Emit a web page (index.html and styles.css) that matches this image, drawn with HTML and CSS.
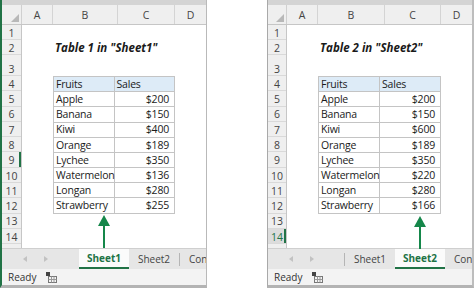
FILE: index.html
```html
<!DOCTYPE html>
<html lang="en">
<head>
    <meta charset="UTF-8">
    <meta name="viewport" content="width=device-width, initial-scale=1.0">
    <title>Table in Sheet1 and Sheet2</title>
    <link rel="stylesheet" href="styles.css">
</head>
<body>
    <!-- Sheet1 window -->
    <div class="panel panel-left">
        <div class="topbar"></div>
        <div class="colheads">
            <div class="corner"></div>
            <div class="colhead">A</div>
            <div class="colhead">B</div>
            <div class="colhead">C</div>
            <div class="colhead">D</div>
        </div>
        <div class="sheet">
            <div class="rowheads">
                <div class="rowhead">1</div>
                <div class="rowhead">2</div>
                <div class="rowhead">3</div>
                <div class="rowhead">4</div>
                <div class="rowhead">5</div>
                <div class="rowhead">6</div>
                <div class="rowhead">7</div>
                <div class="rowhead">8</div>
                <div class="rowhead edge">9</div>
                <div class="rowhead">10</div>
                <div class="rowhead">11</div>
                <div class="rowhead">12</div>
                <div class="rowhead">13</div>
                <div class="rowhead">14</div>
                <div class="rowhead rest"></div>
            </div>
            <div class="cells">
                <div class="title">Table 1 in "Sheet1"</div>
                <table class="data">
                    <tr><th>Fruits</th><th>Sales</th></tr>
                    <tr><td>Apple</td><td class="num">$200</td></tr>
                    <tr><td>Banana</td><td class="num">$150</td></tr>
                    <tr><td>Kiwi</td><td class="num">$400</td></tr>
                    <tr><td>Orange</td><td class="num">$189</td></tr>
                    <tr><td>Lychee</td><td class="num">$350</td></tr>
                    <tr><td>Watermelon</td><td class="num">$136</td></tr>
                    <tr><td>Longan</td><td class="num">$280</td></tr>
                    <tr><td>Strawberry</td><td class="num">$255</td></tr>
                </table>
            </div>
        </div>
        <div class="tabs">
            <div class="tab-nav">
                <svg width="4" height="6" viewBox="0 0 4 6"><path d="M4 0 L0 3 L4 6 Z" fill="#c2c2c2"/></svg>
                <svg width="4" height="6" viewBox="0 0 4 6"><path d="M0 0 L4 3 L0 6 Z" fill="#c2c2c2"/></svg>
            </div>
            <div class="tab active">Sheet1</div>
            <div class="tab">Sheet2</div>
            <span class="sep"></span>
            <div class="tab cut">Con</div>
        </div>
        <div class="status">
            <span>Ready</span>
            <svg class="macro" width="11" height="11" viewBox="0 0 11 11">
                <rect x="0" y="0" width="4" height="4" fill="#444"/>
                <rect x="2.5" y="4.5" width="8" height="6" fill="none" stroke="#777"/>
                <path d="M2.5 7.5 H10.5 M5.5 4.5 V10.5 M8 4.5 V10.5" stroke="#999"/>
            </svg>
        </div>
        <svg class="arrow" width="12" height="33" viewBox="0 0 12 33">
            <path d="M6 0 L0 11 L12 11 Z" fill="#15874a"/>
            <rect x="5" y="10" width="2" height="23" fill="#15874a"/>
        </svg>
    </div>

    <!-- Sheet2 window -->
    <div class="panel panel-right">
        <div class="topbar"></div>
        <div class="colheads">
            <div class="corner"></div>
            <div class="colhead">A</div>
            <div class="colhead">B</div>
            <div class="colhead">C</div>
            <div class="colhead">D</div>
        </div>
        <div class="sheet">
            <div class="rowheads">
                <div class="rowhead">1</div>
                <div class="rowhead">2</div>
                <div class="rowhead">3</div>
                <div class="rowhead">4</div>
                <div class="rowhead">5</div>
                <div class="rowhead">6</div>
                <div class="rowhead">7</div>
                <div class="rowhead">8</div>
                <div class="rowhead">9</div>
                <div class="rowhead">10</div>
                <div class="rowhead">11</div>
                <div class="rowhead">12</div>
                <div class="rowhead">13</div>
                <div class="rowhead edge selected">14</div>
                <div class="rowhead rest"></div>
            </div>
            <div class="cells">
                <div class="title">Table 2 in "Sheet2"</div>
                <table class="data">
                    <tr><th>Fruits</th><th>Sales</th></tr>
                    <tr><td>Apple</td><td class="num">$200</td></tr>
                    <tr><td>Banana</td><td class="num">$150</td></tr>
                    <tr><td>Kiwi</td><td class="num">$600</td></tr>
                    <tr><td>Orange</td><td class="num">$189</td></tr>
                    <tr><td>Lychee</td><td class="num">$350</td></tr>
                    <tr><td>Watermelon</td><td class="num">$220</td></tr>
                    <tr><td>Longan</td><td class="num">$280</td></tr>
                    <tr><td>Strawberry</td><td class="num">$166</td></tr>
                </table>
            </div>
        </div>
        <div class="tabs">
            <div class="tab-nav">
                <svg width="4" height="6" viewBox="0 0 4 6"><path d="M4 0 L0 3 L4 6 Z" fill="#c2c2c2"/></svg>
                <svg width="4" height="6" viewBox="0 0 4 6"><path d="M0 0 L4 3 L0 6 Z" fill="#c2c2c2"/></svg>
            </div>
            <span class="sep"></span>
            <div class="tab">Sheet1</div>
            <div class="tab active">Sheet2</div>
            <div class="tab cut">Con</div>
        </div>
        <div class="status">
            <span>Ready</span>
            <svg class="macro" width="11" height="11" viewBox="0 0 11 11">
                <rect x="0" y="0" width="4" height="4" fill="#444"/>
                <rect x="2.5" y="4.5" width="8" height="6" fill="none" stroke="#777"/>
                <path d="M2.5 7.5 H10.5 M5.5 4.5 V10.5 M8 4.5 V10.5" stroke="#999"/>
            </svg>
        </div>
        <svg class="arrow" width="12" height="33" viewBox="0 0 12 33">
            <path d="M6 0 L0 11 L12 11 Z" fill="#15874a"/>
            <rect x="5" y="10" width="2" height="23" fill="#15874a"/>
        </svg>
    </div>
</body>
</html>
```

FILE: styles.css
```css
body {
    margin: 0;
    padding: 0;
    background-color: #fff;
    font-family: "Open Sans", Lato, sans-serif;
    color: #1a1a1a;
    display: flex;
    gap: 60px;
    width: 474px;
    height: 288px;
    overflow: hidden;
}

.panel {
    --rh: 20px;
    --col-a: 31px;
    --col-b: 65px;
    --col-c: 57px;
    --nav: 77px;
    position: relative;
    width: 207px;
    height: 288px;
    box-sizing: border-box;
    display: flex;
    flex-direction: column;
    border-bottom: 3px solid #b3b3b3;
    background-color: #fff;
}

.panel-left {
    border-left: 2px solid #217346;
    border-right: 1px solid #b9b9b9;
}

.panel-right {
    --rh: 19px;
    --col-b: 67px;
    --col-c: 56px;
    --nav: 76px;
    border-left: 1px solid #a9a9a9;
    border-right: 2px solid #bdbdbd;
}

.topbar {
    height: 5px;
    background-color: #d4d4d4;
    flex-shrink: 0;
}

/* column letters */
.colheads {
    display: grid;
    grid-template-columns: var(--rh) var(--col-a) var(--col-b) var(--col-c) 1fr;
    height: 20px;
    flex-shrink: 0;
    background-color: #efefef;
    border-bottom: 1px solid #c6c6c6;
    box-sizing: border-box;
}

.corner {
    position: relative;
    border-right: 1px solid #d0d0d0;
}

.corner::after {
    content: "";
    position: absolute;
    right: 2px;
    bottom: 2px;
    border-left: 8px solid transparent;
    border-bottom: 8px solid #b8b8b8;
}

.colhead {
    border-right: 1px solid #d4d4d4;
    display: flex;
    align-items: center;
    justify-content: center;
    font-size: 10.5px;
    color: #444;
}

.colhead:last-child {
    border-right: none;
}

/* grid body */
.sheet {
    display: flex;
    height: 223px;
    flex-shrink: 0;
}

.rowheads,
.cells {
    display: grid;
    grid-template-rows: 15px 15px 21px repeat(11, 15.3px) 1fr;
}

.rowheads {
    width: var(--rh);
    flex-shrink: 0;
    background-color: #efefef;
    border-right: 1px solid #c6c6c6;
    box-sizing: border-box;
}

.rowhead {
    border-bottom: 1px solid #d9d9d9;
    box-sizing: border-box;
    display: flex;
    align-items: flex-end;
    justify-content: center;
    padding-bottom: 1px;
    font-size: 10.5px;
    color: #444;
    line-height: 1;
}

.rowhead.rest {
    border-bottom: none;
}

.rowhead.edge {
    box-shadow: inset -2px 0 #217346;
}

.rowhead.selected {
    background-color: #dcdcdc;
    color: #217346;
}

.cells {
    flex: 1;
    grid-template-columns: var(--col-a) var(--col-b) var(--col-c) 1fr;
}

.title {
    grid-row: 2;
    grid-column: 2 / 5;
    align-self: center;
    padding-left: 2px;
    font-size: 11.5px;
    font-weight: bold;
    font-style: italic;
    white-space: nowrap;
}

table.data {
    grid-row: 4 / 13;
    grid-column: 2 / 4;
    width: 100%;
    height: 100%;
    border-collapse: collapse;
    table-layout: fixed;
    font-size: 10.5px;
    letter-spacing: -0.2px;
}

table.data th,
table.data td {
    border: 1px solid #c4c4c4;
    padding: 0 1px 0 2px;
    text-align: left;
    font-weight: normal;
    line-height: 1;
    white-space: nowrap;
}

table.data th {
    background-color: #ddebf7;
}

table.data td.num {
    text-align: right;
    padding-right: 5px;
}

/* sheet tabs */
.tabs {
    display: flex;
    align-items: stretch;
    height: 21px;
    flex-shrink: 0;
    background-color: #e6e6e6;
    border-top: 1px solid #cfcfcf;
    box-sizing: border-box;
    font-size: 10px;
    color: #444;
    overflow: hidden;
}

.tab-nav {
    width: var(--nav);
    flex-shrink: 0;
    display: flex;
    align-items: center;
    gap: 17px;
    padding-left: 21px;
    box-sizing: border-box;
}

.tab {
    width: 50px;
    flex-shrink: 0;
    display: flex;
    align-items: center;
    justify-content: center;
    box-sizing: border-box;
}

.tab.active {
    background-color: #fbfbfb;
    color: #217346;
    font-weight: bold;
    border-bottom: 2px solid #217346;
}

.tab.cut {
    justify-content: flex-start;
    padding-left: 9px;
}

.sep {
    width: 1px;
    height: 13px;
    align-self: center;
    background-color: #b5b5b5;
    flex-shrink: 0;
}

/* status bar */
.status {
    flex: 1;
    display: flex;
    align-items: center;
    padding-left: 6px;
    background-color: #f3f3f3;
    font-size: 10px;
    color: #333;
}

.macro {
    margin-left: 10px;
}

.arrow {
    position: absolute;
    top: 215px;
    left: 96px;
}

.panel-right .arrow {
    left: 146px;
    top: 216px;
}
```
